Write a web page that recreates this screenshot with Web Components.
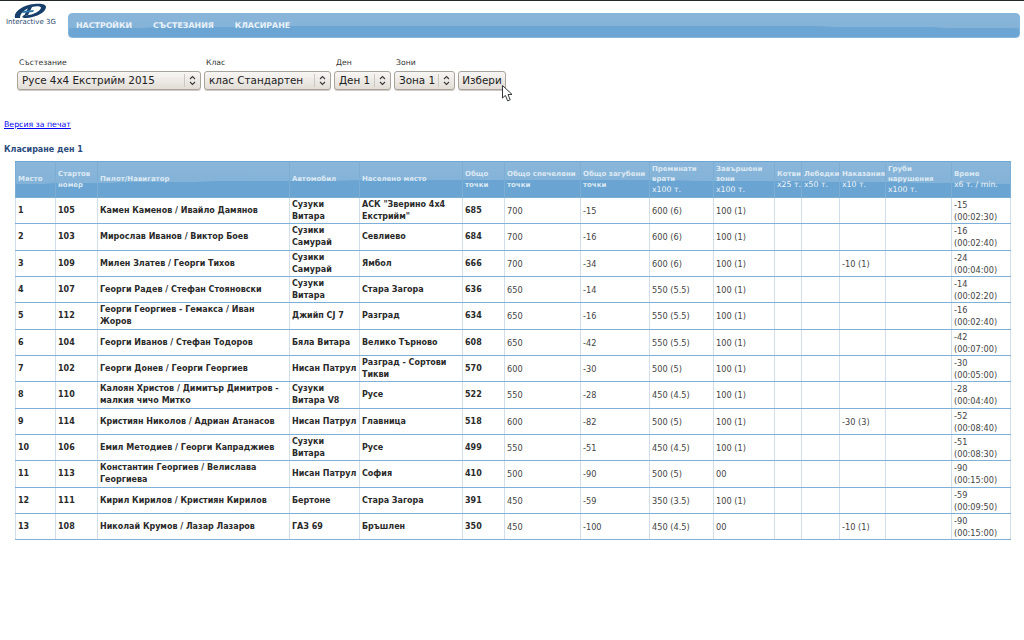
<!DOCTYPE html>
<html lang="bg">
<head>
<meta charset="utf-8">
<title>Класиране</title>
<style>
  html, body { margin: 0; background: #fff; }
  body { border-top: 1px solid #23282b; font-family: "DejaVu Sans", sans-serif; font-size: 8px; color: #222; }
</style>
</head>
<body>
<site-header></site-header>
<filter-bar></filter-bar>
<print-link></print-link>
<results-table></results-table>

<script>
class SiteHeader extends HTMLElement {
    constructor() {
        super();
        this.shadowDOM = this.attachShadow({mode: "open"});
        this.shadowDOM.innerHTML = `
        <style>
            :host { display: flex; height: 41px; box-sizing: border-box; padding: 0 4px 0 0; }
            .logo { width: 68px; flex: none; display: flex; flex-direction: column; align-items: flex-start; padding: 2px 0 0 6px; box-sizing: border-box; }
            .logo svg { display: block; margin-left: 8px; }
            .logo span { font-size: 7px; line-height: 8px; margin-top: -1px; color: #2b4a70; white-space: nowrap; }
            nav {
                flex: 1; height: 25px; margin-top: 12px; box-sizing: border-box;
                display: flex; gap: 21px; padding-left: 7px; align-items: center;
                border: 1px solid #86b6dc; border-radius: 4px;
                background:
                    radial-gradient(ellipse 75% 50% at 50% 100%, #6aa5d3 99%, transparent 100%),
                    linear-gradient(#89b5d9, #82b1d7);
            }
            a { color: #e9f2f9; font-weight: bold; font-size: 7.9px; text-decoration: none; }
        </style>
        <div class="logo">
            <svg width="33" height="16" viewBox="0 0 33 16">
                <path d="M1 15 C-1 9 9 2 20 1 C27 0 32 1 32 4 C32 9 23 14 13 15 C11 15 9 15 8 14 L10 12 C18 13 27 8 27 4.500 C26 3 22 3 18 4 C11 6 6 10 6 15 Z" fill="#173f6b"/>
                <path d="M19 2 L14 12 L10.500 12 L15 3 Z" fill="#173f6b"/>
                <path d="M9 8 L20 7 L19 9 L8 10 Z" fill="#2c78ad"/>
            </svg>
            <span>Interactive 3G</span>
        </div>
        <nav><a>НАСТРОЙКИ</a><a>СЪСТЕЗАНИЯ</a><a>КЛАСИРАНЕ</a></nav>
        `;
    }
}
customElements.define("site-header", SiteHeader);

class FieldSelect extends HTMLElement {
    constructor() {
        super();
        this.shadowDOM = this.attachShadow({mode: "open"});
    }

    connectedCallback() {
        const w = this.getAttribute("width");
        this.shadowDOM.innerHTML = `
        <style>
            :host { display: flex; flex-direction: column; width: ${w}px; }
            label { font-size: 7.7px; line-height: 11px; height: 11px; padding-left: 2px; color: #333; }
            .box {
                height: 19px; margin-top: 3px; box-sizing: border-box;
                display: flex; align-items: center; padding: 0 0 1px 4px;
                border: 1px solid #a8a39b; border-radius: 3px;
                background: linear-gradient(#f8f6f4, #e2ddd6);
                font-size: 10.400px; color: #222; white-space: nowrap;
                box-shadow: 0 1px 0 #cfcbc5;
            }
            .text { flex: 1; overflow: hidden; }
            .arrows { flex: none; width: 15px; height: 13px; border-left: 1px solid #cdc8c1; display: flex; align-items: center; justify-content: center; }
        </style>
        <label>${this.getAttribute("label")}</label>
        <div class="box">
            <span class="text"><slot></slot></span>
            <span class="arrows">
                <svg width="7" height="11" viewBox="0 0 7 11" fill="none" stroke="#3a3a3a" stroke-width="1.1">
                    <path d="M1 4 L3.5 1.5 L6 4"/><path d="M1 7 L3.5 9.5 L6 7"/>
                </svg>
            </span>
        </div>
        `;
    }
}
customElements.define("field-select", FieldSelect);

class FilterBar extends HTMLElement {
    constructor() {
        super();
        this.shadowDOM = this.attachShadow({mode: "open"});
        this.shadowDOM.innerHTML = `
        <style>
            :host { display: flex; gap: 3px; align-items: flex-start; padding: 15px 0 0 17px; position: relative; height: 35px; }
            button {
                height: 19px; width: 48px; padding: 0 0 1px; margin-top: 14px; box-sizing: border-box;
                border: 1px solid #a8a39b; border-radius: 3px;
                background: linear-gradient(#f8f6f4, #e2ddd6);
                font: 10.400px "DejaVu Sans", sans-serif; color: #222;
                box-shadow: 0 1px 0 #cfcbc5;
            }
            svg { position: absolute; left: 502px; top: 43px; }
        </style>
        <field-select label="Състезание" width="184">Русе 4х4 Екстрийм 2015</field-select>
        <field-select label="Клас" width="127">клас Стандартен</field-select>
        <field-select label="Ден" width="57">Ден 1</field-select>
        <field-select label="Зони" width="61">Зона 1</field-select>
        <button>Избери</button>
        <svg width="12" height="17" viewBox="0 0 12 17">
            <path d="M0.500 0.500 L0.500 13 L3.400 10.400 L5.600 15.800 L8.200 14.800 L6 9.600 L10 9.400 Z" fill="#fff" stroke="#33373a" stroke-width="1"/>
        </svg>
        `;
    }
}
customElements.define("filter-bar", FilterBar);

class PrintLink extends HTMLElement {
    constructor() {
        super();
        this.shadowDOM = this.attachShadow({mode: "open"});
        this.shadowDOM.innerHTML = `
        <style>
            :host { display: block; padding: 27px 0 0 4px; }
            a { color: #0000ee; text-decoration: underline; font-size: 7.800px; line-height: 11px; display: inline-block; }
        </style>
        <a href="#">Версия за печат</a>
        `;
    }
}
customElements.define("print-link", PrintLink);

const HEADERS = [
    ["Място"], ["Стартов номер"], ["Пилот/Навигатор"], ["Автомобил"], ["Населено място"],
    ["Общо точки"], ["Общо спечелени точки"], ["Общо загубени точки"],
    ["Преминати врати", "x100 т."], ["Завършени зони", "x100 т."],
    ["Котви", "x25 т."], ["Лебедки", "x50 т."], ["Наказания", "x10 т."],
    ["Груби нарушения", "x100 т."], ["Време", "x6 т. / min."]
];

const WIDTHS = [40, 42, 192, 70, 103, 42, 76, 69, 64, 61, 27, 38, 46, 66, 59];

// място, номер, екипаж, автомобил, град, общо, спечелени, загубени, врати, зони, наказания, време
const ROWS = [
    [1, 105, "Камен Каменов / Ивайло Дамянов", "Сузуки Витара", 'АСК "Зверино 4х4 Екстрийм"', 685, 700, -15, "600 (6)", "100 (1)", "", "-15 (00:02:30)"],
    [2, 103, "Мирослав Иванов / Виктор Боев", "Сузики Самурай", "Севлиево", 684, 700, -16, "600 (6)", "100 (1)", "", "-16 (00:02:40)"],
    [3, 109, "Милен Златев / Георги Тихов", "Сузики Самурай", "Ямбол", 666, 700, -34, "600 (6)", "100 (1)", "-10 (1)", "-24 (00:04:00)"],
    [4, 107, "Георги Радев / Стефан Стояновски", "Сузуки Витара", "Стара Загора", 636, 650, -14, "550 (5.5)", "100 (1)", "", "-14 (00:02:20)"],
    [5, 112, "Георги Георгиев - Гемакса / Иван Жоров", "Джийп CJ 7", "Разград", 634, 650, -16, "550 (5.5)", "100 (1)", "", "-16 (00:02:40)"],
    [6, 104, "Георги Иванов / Стефан Тодоров", "Бяла Витара", "Велико Търново", 608, 650, -42, "550 (5.5)", "100 (1)", "", "-42 (00:07:00)"],
    [7, 102, "Георги Донев / Георги Георгиев", "Нисан Патрул", "Разград - Сортови Тикви", 570, 600, -30, "500 (5)", "100 (1)", "", "-30 (00:05:00)"],
    [8, 110, "Калоян Христов / Димитър Димитров - малкия чичо Митко", "Сузуки Витара V8", "Русе", 522, 550, -28, "450 (4.5)", "100 (1)", "", "-28 (00:04:40)"],
    [9, 114, "Кристиян Николов / Адриан Атанасов", "Нисан Патрул", "Главница", 518, 600, -82, "500 (5)", "100 (1)", "-30 (3)", "-52 (00:08:40)"],
    [10, 106, "Емил Методиев / Георги Капраджиев", "Сузуки Витара", "Русе", 499, 550, -51, "450 (4.5)", "100 (1)", "", "-51 (00:08:30)"],
    [11, 113, "Константин Георгиев / Велислава Георгиева", "Нисан Патрул", "София", 410, 500, -90, "500 (5)", "00", "", "-90 (00:15:00)"],
    [12, 111, "Кирил Кирилов / Кристиян Кирилов", "Бертоне", "Стара Загора", 391, 450, -59, "350 (3.5)", "100 (1)", "", "-59 (00:09:50)"],
    [13, 108, "Николай Крумов / Лазар Лазаров", "ГАЗ 69", "Бръшлен", 350, 450, -100, "450 (4.5)", "00", "-10 (1)", "-90 (00:15:00)"]
];

class ResultsTable extends HTMLElement {
    constructor() {
        super();
        this.shadowDOM = this.attachShadow({mode: "open"});
    }

    connectedCallback() {
        this.render();
    }

    render() {
        const head = HEADERS.map(h => {
            const note = h[1] ? `<br><span>${h[1]}</span>` : "";
            return `<th>${h[0]}${note}</th>`;
        }).join("");
        const body = ROWS.map(r => `
            <tr>
                <td class="b">${r[0]}</td>
                <td class="b">${r[1]}</td>
                <td class="b">${r[2]}</td>
                <td class="b">${r[3]}</td>
                <td class="b">${r[4]}</td>
                <td class="b">${r[5]}</td>
                <td>${r[6]}</td>
                <td>${r[7]}</td>
                <td>${r[8]}</td>
                <td>${r[9]}</td>
                <td></td>
                <td></td>
                <td>${r[10]}</td>
                <td></td>
                <td>${r[11]}</td>
            </tr>`).join("");
        this.shadowDOM.innerHTML = `
        <style>
            :host { display: block; padding: 0 14px 0 4px; }
            h3 { margin: 14px 0 6px; font-size: 8px; line-height: 11px; color: #2c4a7c; font-weight: bold; }
            table { width: 995px; margin-left: 11px; border-collapse: collapse; table-layout: fixed; }
            thead tr {
                height: 36px;
                background:
                    radial-gradient(ellipse 80% 50% at 50% 100%, #69a4d2 99%, transparent 100%),
                    linear-gradient(#8ab6da, #7fb0d7);
            }
            th {
                padding: 0 1px 0 2px; text-align: left; font-size: 7px; line-height: 10.500px; font-weight: bold;
                color: #dce9f3; border: 1px solid #7cadd3; border-top-color: #69a4d2;
                vertical-align: middle;
            }
            th span { font-size: 7.800px; font-weight: normal; color: #eef4f9; white-space: nowrap; }
            tbody tr { height: 26.33px; }
            td {
                padding: 1px 1px 0 2px; font-size: 8.200px; line-height: 12.100px; color: #444;
                border-left: 1px solid #d2deea; border-right: 1px solid #d2deea;
                border-bottom: 1px solid #7fb0d9; vertical-align: middle;
            }
            td.b { font-size: 8px; font-weight: bold; color: #2a2a2a; }
        </style>
        <h3>Класиране ден 1</h3>
        <table>
            <colgroup>${WIDTHS.map(w => `<col style="width:${w}px">`).join("")}</colgroup>
            <thead><tr>${head}</tr></thead>
            <tbody>${body}</tbody>
        </table>
        `;
    }
}
customElements.define("results-table", ResultsTable);
</script>
</body>
</html>
